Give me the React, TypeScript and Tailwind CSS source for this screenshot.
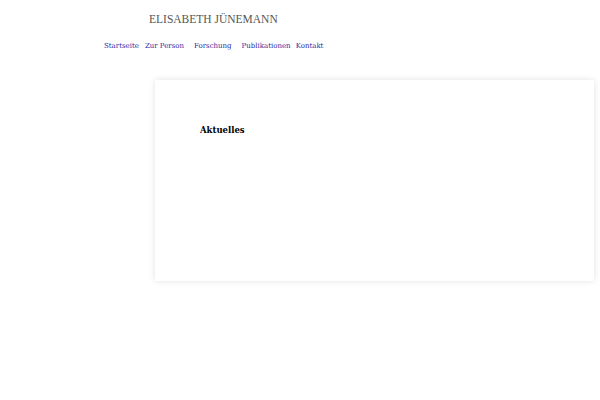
export default function App() {
  const links = [
    { label: 'Startseite', cls: 'ml-0' },
    { label: 'Zur Person', cls: 'ml-[6px]' },
    { label: 'Forschung', cls: 'ml-[10px]' },
    { label: 'Publikationen', cls: 'ml-[10px]' },
    { label: 'Kontakt', cls: 'ml-[5px]' },
  ];

  return (
    <div className="min-h-[400px] w-[600px] overflow-hidden bg-white">
      <header className="pt-[11px]">
        <h1 className="pl-[149px] text-[11.5px] leading-[16px] text-[#555555] font-['Liberation_Serif',serif] font-normal">
          ELISABETH JÜNEMANN
        </h1>
        <nav className="mt-[14px] flex pl-[104px] font-['DejaVu_Serif',serif] text-[7px] leading-[10px] text-[#2a2aa3]">
          {links.map((l) => (
            <a key={l.label} href="#" className={l.cls}>
              {l.label}
            </a>
          ))}
        </nav>
      </header>

      <main className="mt-[29px] ml-[155px] mr-[6px] h-[201px] bg-white shadow-[0_0_6px_rgba(0,0,0,0.12)]">
        <h2 className="pl-[45px] pt-[44px] font-['DejaVu_Serif',serif] text-[8.5px] font-bold leading-[12px] text-black">
          Aktuelles
        </h2>
      </main>
    </div>
  );
}
